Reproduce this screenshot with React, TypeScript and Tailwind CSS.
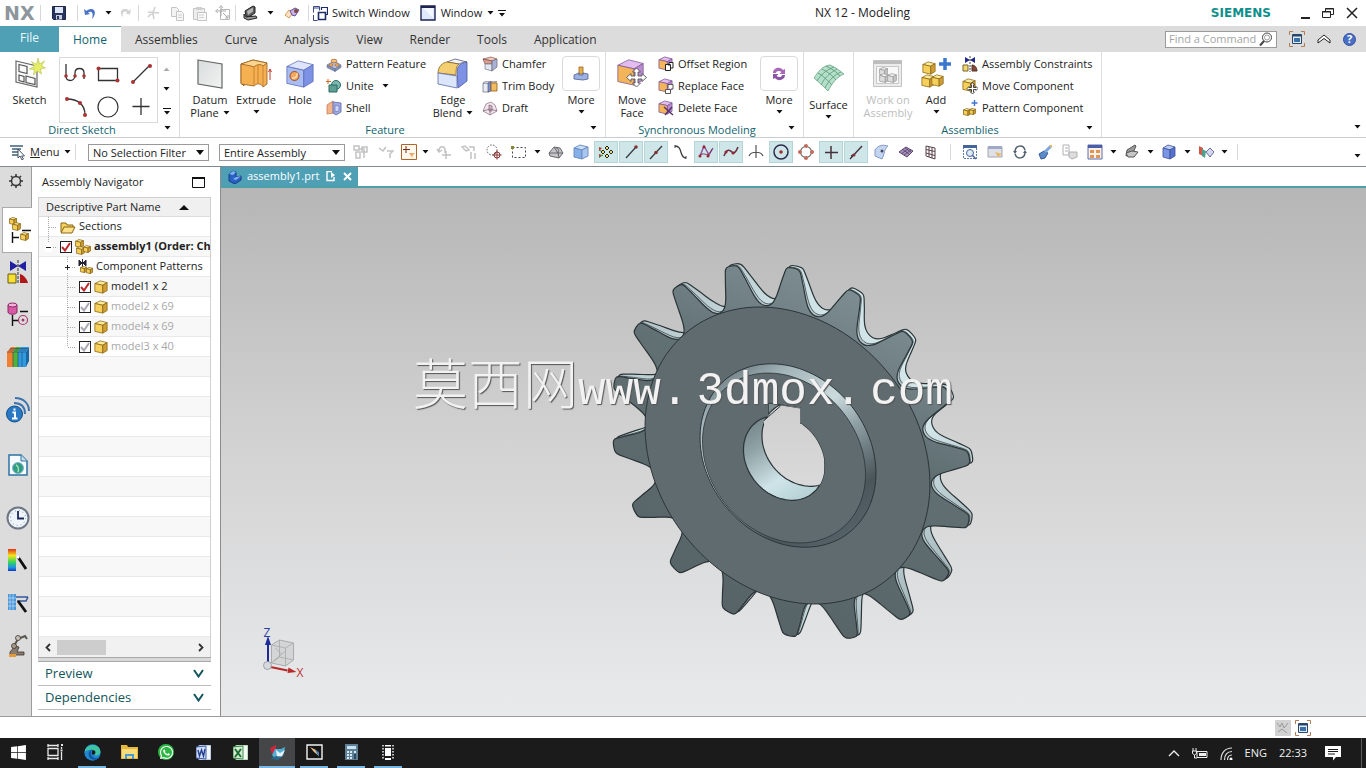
import React, { useState } from "react"
import type { ReactNode } from "react"
import { FaWhatsapp, FaWindows } from "react-icons/fa"

type SvgProps = { w?: number; h?: number; vb?: string; children: ReactNode }

const Svg = ({ w = 16, h, vb, children }: SvgProps) => (
    <svg width={w} height={h ?? w} viewBox={vb ?? `0 0 ${w} ${h ?? w}`} fill="none" className="shrink-0" aria-hidden="true">
        {children}
    </svg>
)

const Caret = ({ color = "#111" }: { color?: string }) => (
    <Svg w={7} h={4}><path d="M0.5 0h6L3.5 3.5z" fill={color} /></Svg>
)

const cubeColors = {
    yellow: ["#fdeb9a", "#f5d05a", "#cf9e34", "#8a6414"],
    orange: ["#f9c77a", "#f1a13c", "#d98422", "#8a5414"],
    purple: ["#e3bdf0", "#f4b45a", "#b98ad0", "#7c5694"],
    blue: ["#dfe6fb", "#a9bdf5", "#7d92e4", "#5a68b4"],
    gray: ["#f4f4f4", "#dedede", "#c6c6c6", "#9a9a9a"],
}

const cubeShape = (x: number, y: number, s: number, tone: keyof typeof cubeColors) => {
    const [top, front, side, line] = cubeColors[tone]
    return (
        <g transform={`translate(${x} ${y}) scale(${s / 16})`} stroke={line} strokeWidth={12 / s} strokeLinejoin="round">
            <path d="M1 4l6-3 8 2-5 3z" fill={top} />
            <path d="M1 4l9 2v9l-9-2z" fill={front} />
            <path d="M10 6l5-3v9l-5 3z" fill={side} />
        </g>
    )
}

const Cube = ({ size = 16, tone = "yellow" as keyof typeof cubeColors }) => <Svg w={size}>{cubeShape(0, 0, size, tone)}</Svg>

/* ---------- title bar ---------- */

const SaveIcon = () => (
    <Svg w={14}>
        <path d="M0.5 0.5h13v13h-12l-1-1z" fill="#27355f" stroke="#1c274a" />
        <path d="M3 1h8v6H3z" fill="#dfe6f4" />
        <path d="M4 9h6v4.5H4z" fill="#c9cfdd" />
        <path d="M5 10h2v3H5z" fill="#27355f" />
    </Svg>
)

const UndoIcon = ({ color = "#4a73c8" }) => (
    <Svg w={14} h={13}>
        <path d="M1 2l1 6 5-1-2-1.5C8 3.5 11 5 9 12c4-4 4-10-1-10C6 2 4 3 3.5 4z" fill={color} />
    </Svg>
)

const RedoIcon = () => (
    <Svg w={12} h={12}>
        <path d="M11 2l-1 5.500-4.500-1 2-1.500C4 3.500 2 5 3 10-1 6 1 2 5 2c2 0 3 .7 4 1.700z" fill="#d2d2d2" />
    </Svg>
)

const CutIcon = () => (
    <Svg w={14}><path d="M9 1L6 9M2 6l11 1M7 8l1 5M5 8l-3 3" stroke="#d0d0d0" strokeWidth="1.6" /></Svg>
)

const CopyIcon = () => (
    <Svg w={15}>
        <path d="M1.500 1.500h5l2 2v7h-7z" fill="#f3f3f3" stroke="#c4c4c4" />
        <path d="M6.500 5.500h5l2 2v7h-7z" fill="#f7f7f7" stroke="#c4c4c4" />
        <path d="M8 9h4M8 11.500h4" stroke="#d0d0d0" />
    </Svg>
)

const PasteIcon = () => (
    <Svg w={15}>
        <path d="M1.500 2.500h11v11h-11z" fill="#eee" stroke="#c4c4c4" />
        <path d="M4 1h6v3H4z" fill="#cfcfcf" />
        <path d="M5.500 6.500h9v8h-9z" fill="#f8f8f8" stroke="#c4c4c4" />
        <path d="M7 9h5M7 11.500h5" stroke="#d0d0d0" />
    </Svg>
)

const MoveBoxIcon = () => (
    <Svg w={16}>
        <path d="M5.500 4.500h9v10h-9z" stroke="#b8b8b8" />
        <path d="M6 1v10M1 6h10M8 8l5 5M10 13h3v-3" stroke="#a8a8a8" />
        <path d="M4 3l2-2.500L8 3M3 4L.5 6 3 8" stroke="#b8b8b8" />
    </Svg>
)

const RotateSheetIcon = () => (
    <Svg w={17} h={16}>
        <path d="M3 6l8-5 2 1v6l-6 4-3-1z" fill="#5c5c5c" stroke="#222" />
        <path d="M5 6l6-3.500v4L6 10z" fill="#b4b4b4" />
        <path d="M2 9l2 3 10-1 1 2-9 2-4-2z" fill="#9a9a9a" stroke="#222" />
    </Svg>
)

const EraserIcon = () => (
    <Svg w={16} h={12}>
        <path d="M1 8l4-5 4 3-4 5z" fill="#fbe3c3" stroke="#d69b58" />
        <path d="M6 4l5-3 4 2-4 6-3-1z" fill="#c5b4e6" stroke="#6b4a9c" />
        <circle cx="12" cy="4" r="2" fill="#7a4a3a" />
    </Svg>
)

const SwitchWindowIcon = () => (
    <Svg w={15}>
        <path d="M.5 6.500v-6h6v4M.5 2h6" stroke="#3a4a86" />
        <path d="M.5 9v5.500h4" stroke="#3a4a86" />
        <path d="M5.500 6.500h7v7h-7z" fill="#fff" stroke="#1d2c66" strokeWidth="1.600" />
        <path d="M8.500 4V1.500h6v7H13" stroke="#1d2c66" strokeWidth="1.200" />
    </Svg>
)

const WindowIcon = () => (
    <Svg w={16}>
        <path d="M1 1h14v14H1z" fill="#dfe7fb" stroke="#1d2452" strokeWidth="1.400" />
        <path d="M3 3l10 10V3z" fill="#f4f7ff" />
        <path d="M1 1h14v2H1z" fill="#1d2452" />
    </Svg>
)

const OverflowIcon = () => (
    <Svg w={8} h={7}><path d="M0 .5h8" stroke="#111" /><path d="M1 3h6L4 6.500z" fill="#111" /></Svg>
)

const Sep = () => <span className="h-4 w-px shrink-0 bg-[#d8d8d8]" />

const TitleButton = ({ label, width, children }: { label: string; width: string; children: ReactNode }) => (
    <button aria-label={label} className={`flex h-6 items-center justify-center ${width}`}>{children}</button>
)

const TitleBar = () => (
    <header className="flex h-[26px] items-center bg-white text-[#222]">
        <span className="w-9 pl-1 font-['DejaVu_Sans'] text-[19px] leading-6 font-bold text-[#8d969c]">NX</span>
        <div className="flex items-center">
            <span className="w-1" />
            <Sep />
            <TitleButton label="Save" width="w-9"><SaveIcon /></TitleButton>
            <Sep />
            <TitleButton label="Undo" width="w-6"><UndoIcon /></TitleButton>
            <TitleButton label="Undo list" width="w-3"><Caret /></TitleButton>
            <TitleButton label="Redo" width="w-6"><RedoIcon /></TitleButton>
            <Sep />
            <TitleButton label="Cut" width="w-7"><CutIcon /></TitleButton>
            <TitleButton label="Copy" width="w-5"><CopyIcon /></TitleButton>
            <TitleButton label="Paste" width="w-6"><PasteIcon /></TitleButton>
            <TitleButton label="Move object" width="w-6"><MoveBoxIcon /></TitleButton>
            <Sep />
            <TitleButton label="Orient view" width="w-7"><RotateSheetIcon /></TitleButton>
            <TitleButton label="View list" width="w-3"><Caret /></TitleButton>
            <TitleButton label="Eraser" width="w-8"><EraserIcon /></TitleButton>
            <Sep />
        </div>
        <button className="ml-1 flex items-center gap-1 text-[11px] text-[#222]"><SwitchWindowIcon />Switch Window</button>
        <button className="ml-2.5 flex items-center gap-[5px] text-[11px] text-[#222]"><WindowIcon />Window<Caret /></button>
        <button aria-label="More commands" className="p-1"><OverflowIcon /></button>
        <h1 className="flex-1 pl-1 text-center text-[12px]">NX 12 - Modeling</h1>
        <div className="flex items-center">
            <span className="pr-[26px] font-['DejaVu_Sans'] text-[12px] font-bold text-[#0f8f8a]">SIEMENS</span>
            <button aria-label="Minimize" className="pr-3 pl-1"><Svg w={9} h={12}><path d="M0 11h9" stroke="#222" strokeWidth="2" /></Svg></button>
            <button aria-label="Restore" className="w-6">
                <Svg w={12} h={10}><path d="M3.500 3V.5h8v6H9M.5 3.500h8v6h-8z" stroke="#222" /><path d="M3 1h9M0 4h9" stroke="#222" /></Svg>
            </button>
            <button aria-label="Close" className="w-5"><Svg w={12}><path d="M1 1l10 10M11 1L1 11" stroke="#222" strokeWidth="1.500" /></Svg></button>
        </div>
    </header>
)

/* ---------- ribbon tabs ---------- */

const tabs = ["Home", "Assemblies", "Curve", "Analysis", "View", "Render", "Tools", "Application"]

const FullScreenIcon = () => (
    <Svg w={16}>
        <path d="M.5 4V.5H4M12 .5h3.500V4M15.500 12v3.500H12M4 15.500H.5V12" stroke="#b07c58" />
        <path d="M3.500 3.500h9v9h-9z" fill="#dfeaf4" stroke="#2b4666" />
        <path d="M4 4.500h8" stroke="#2b4666" strokeWidth="2" />
        <path d="M5 7h6v4H5z" fill="#3a72a8" />
    </Svg>
)

const TabBar = () => {
    const [active, setActive] = useState<string>("Home")
    return (
        <nav className="flex h-[26px] items-stretch gap-px bg-[#dcdcdc] text-[12px] text-[#333]">
            <button className="-mr-px w-[59px] bg-[#4f9fb5] pb-0.5 text-[#eafaff]">File</button>
            {tabs.map((tab) => (
                <button
                    key={tab}
                    onClick={() => setActive(tab)}
                    className={tab === active ? "border-t border-[#6f9aa6] bg-white px-[14px] text-[#12636e]" : "px-[13px] pt-px"}
                >
                    {tab}
                </button>
            ))}
            <div className="flex flex-1 items-center justify-end gap-3 pr-[10px]">
                <label className="flex h-[17px] w-28 items-center border border-[#9a9a9a] bg-white">
                    <input aria-label="Find a Command" placeholder="Find a Command" className="h-4 w-[92px] pl-[3px] text-[11px] outline-none placeholder:text-[#a5a5a5]" />
                    <Svg w={15}><circle cx="9" cy="5.500" r="4.500" stroke="#444" /><circle cx="9" cy="5.500" r="2.500" stroke="#777" strokeWidth="0.700" /><path d="M6 9l-4 4.500" stroke="#444" strokeWidth="2" /></Svg>
                </label>
                <button aria-label="Full screen"><FullScreenIcon /></button>
                <button aria-label="Minimize ribbon">
                    <Svg w={14} h={11}><path d="M1 6l6-5 6 5v3L7 4.500 1 9z" fill="#fff" stroke="#222" strokeLinejoin="round" /></Svg>
                </button>
                <button aria-label="Help" className="flex h-[13px] w-[13px] items-center justify-center rounded-full border border-[#2d4fa0] bg-[#4a6fc4] text-[11px] leading-3 font-bold text-white">?</button>
            </div>
        </nav>
    )
}

/* ---------- ribbon icons ---------- */

const SketchIcon = () => (
    <Svg w={32}>
        <path d="M2 3l21 5v21L2 24z" fill="#fafafa" stroke="#666" strokeWidth="1.200" />
        <path d="M5 6.500l8 2v7l-8-2zM5 17l5 1.500v5.500l-5-1.500zM12 18l9 2.500v6l-9-2z" stroke="#555" strokeWidth="1.200" />
        <path d="M24 0l1.500 6 5-3-3 5 4 2-5 1 1 5-4-3-4 4 1-5.500-5-.5 5-2.500-3-5 5 3z" fill="#e6ee66" stroke="#b4c04a" strokeWidth="0.600" />
    </Svg>
)

const ProfileIcon = () => (
    <Svg w={26}>
        <path d="M3 3v12c0 6 8 6 9 0V12c0-6 9-6 9 0v6" stroke="#333" strokeWidth="1.300" />
        <g fill="#a33"><circle cx="3" cy="15" r="1.800" /><circle cx="12" cy="15" r="1.800" /><circle cx="21" cy="15" r="1.800" /></g>
    </Svg>
)
const RectIcon = () => (
    <Svg w={26}>
        <path d="M3.500 7.500h19v12h-19z" stroke="#333" strokeWidth="1.300" />
        <circle cx="3.500" cy="7.500" r="2" fill="#a33" /><circle cx="22.500" cy="19.500" r="2" fill="#a33" />
    </Svg>
)
const LineIcon = () => (
    <Svg w={26}>
        <path d="M5 21L22 4" stroke="#333" strokeWidth="1.200" />
        <circle cx="5" cy="21" r="2" fill="#a33" /><circle cx="22" cy="5" r="2" fill="#a33" />
    </Svg>
)
const ArcIcon = () => (
    <Svg w={26}>
        <path d="M4 6c10 0 18 5 18 16" stroke="#333" strokeWidth="1.300" />
        <g fill="#a33"><circle cx="4" cy="6" r="2" /><circle cx="17" cy="10" r="2" /><circle cx="22" cy="22" r="2" /></g>
    </Svg>
)
const CircleIcon = () => <Svg w={26}><circle cx="13" cy="14" r="10" stroke="#333" strokeWidth="1.200" /></Svg>
const PlusIcon = () => <Svg w={26}><path d="M13 5v17M4.500 13.500h17" stroke="#333" strokeWidth="1.300" /></Svg>

const DatumIcon = () => (
    <Svg w={32}>
        <defs><linearGradient id="datum" x1="0" y1="0" x2="1" y2="1"><stop stopColor="#d8dcdc" /><stop offset="1" stopColor="#f2f3f3" /></linearGradient></defs>
        <path d="M4 2l24 4v24L4 26z" fill="url(#datum)" stroke="#666" strokeWidth="1.200" />
    </Svg>
)

const ExtrudeIcon = () => (
    <Svg w={32}>
        <path d="M1 6l3 3v19l-3-3z" fill="#e09330" stroke="#9a5c14" strokeWidth="0.800" />
        <path d="M1 6l12-4 14 3v21l-4 3c-2-4-6-4-9-1L1 26z" fill="#f5b052" stroke="#9a5c14" strokeWidth="0.800" />
        <path d="M1 6l10 2 3 1c3-3 7-3 9-1l4-3-14-3z" fill="#fbd590" stroke="#9a5c14" strokeWidth="0.800" />
        <path d="M14 9v19M18 7v19M23 8v20" stroke="#c07c2c" strokeWidth="0.800" />
        <path d="M30 22V11M28.500 14l1.500-3 1.500 3" stroke="#c0392b" />
    </Svg>
)

const HoleIcon = () => (
    <Svg w={32}>
        {cubeShape(1, 1, 30, "blue")}
        <circle cx="10.500" cy="18" r="4.500" fill="#f3a860" stroke="#a04c22" />
        <path d="M8 20a4 4 0 005-5" stroke="#fde0b5" strokeWidth="1.500" />
    </Svg>
)

const PatternFeatureIcon = () => (
    <Svg>
        <path d="M1 9l7-4 7 4-6 4z" fill="#b6c0de" stroke="#7a82a4" strokeWidth="0.800" />
        <path d="M1 9v2.500l8 4V13zM9 13v2.500l6-4V9z" fill="#8090bc" stroke="#6a7294" strokeWidth="0.600" />
        <g fill="#f6c070" stroke="#a0622a" strokeWidth="0.700"><ellipse cx="8" cy="5" rx="3" ry="1.800" /><ellipse cx="5" cy="9" rx="2" ry="1.200" /><ellipse cx="11" cy="9" rx="2" ry="1.200" /></g>
    </Svg>
)
const UniteIcon = () => (
    <Svg>
        <circle cx="10" cy="7" r="4.500" fill="#7db8ae" stroke="#2b6b62" />
        <path d="M3 7h8v7H3z" fill="#5d9f95" stroke="#2b6b62" />
        <path d="M2 1v5M0 3.500h5" stroke="#d2691e" />
    </Svg>
)
const ShellIcon = () => (
    <Svg>
        <path d="M1 5l6-4 1 12-7 1z" fill="#f4b48a" stroke="#c47c54" strokeWidth="0.800" />
        <path d="M7 2l8 1v9l-5 3-3-2z" fill="#a3aee6" stroke="#5a62a4" strokeWidth="0.800" />
        <path d="M9 5l4 1v5l-4 1z" fill="#cfd6fa" stroke="#5a62a4" strokeWidth="0.600" />
    </Svg>
)
const EdgeBlendIcon = () => (
    <Svg w={32}>
        <path d="M20 12c1-5 4-7 10-8v19l-9 7z" fill="#7d92e4" stroke="#4a579a" strokeWidth="0.800" />
        <path d="M10 4l8-3 12 3c-4 0-6 1-8 2z" fill="#f4f4fb" stroke="#5a5a7a" strokeWidth="0.800" />
        <path d="M1 14C2 8 5 5 10 4l12 2c-3 2-3 6-3 11L1 15z" fill="#f3cf72" stroke="#8a6414" strokeWidth="0.800" />
        <path d="M1 15l19 3v12L1 26z" fill="#dce6fb" stroke="#5a6ab0" strokeWidth="0.800" />
    </Svg>
)
const ChamferIcon = () => (
    <Svg>
        <path d="M1 3l9 2 5-2-6-2z" fill="#f0c8ba" stroke="#8a5a5a" strokeWidth="0.700" />
        <path d="M1 3l2 5h7V5z" fill="#d8a292" stroke="#7a4a4a" strokeWidth="0.700" />
        <path d="M3 8h7v7l-7-2z" fill="#e4e7f2" stroke="#778" strokeWidth="0.700" /><path d="M10 5l5-2v8l-5 4z" fill="#a9b2d6" stroke="#667" strokeWidth="0.700" />
    </Svg>
)
const TrimIcon = () => (
    <Svg>
        <path d="M1 5h6v9H1z" fill="#e8ecf6" stroke="#778" strokeWidth="0.800" /><path d="M1 5l2-1.500h12L13 5z" fill="#f4f4f8" stroke="#778" strokeWidth="0.600" /><path d="M6 5l3-1.500V13l-3 1z" fill="#7e92d8" stroke="#445" strokeWidth="0.600" /><path d="M9 5h6v8H9z" fill="#f2bd62" stroke="#8a5c1c" strokeWidth="0.800" />
    </Svg>
)
const DraftIcon = () => (
    <Svg>
        <path d="M1 11l3-7 5-2 4 3 2 6-7 4z" fill="#efe6ed" stroke="#9a7a8c" strokeWidth="0.800" /><path d="M7 5l3 1v5H7z" fill="#cfb8c8" stroke="#8a6a7c" strokeWidth="0.800" /><path d="M1 11l7-2 7 2M8 9v6" stroke="#8a6a7c" strokeWidth="0.800" />
    </Svg>
)
const MoreFeatureIcon = () => (
    <Svg w={16}>
        <path d="M6 1h4v7H6z" fill="#e8b04e" stroke="#96661c" strokeWidth="0.800" /><path d="M1 9l5-2v2h4V7l5 1v5l-5 1-9-1z" fill="#9db2e4" stroke="#4c5c90" strokeWidth="0.800" />
    </Svg>
)
const MoveFaceIcon = () => (
    <Svg w={32}>
        {cubeShape(0, 0, 29, "purple")}
        <path d="M20.500 10l4 4h-2.500v4h4v-2.500l4.500 4-4.500 4V21h-4v4h2.500l-4 4-4-4H19v-4h-4v2.500l-4.500-4 4.500-4V18h4v-4h-2.500z" fill="#fff" stroke="#555" strokeWidth="0.900" />
    </Svg>
)
const FaceIcon = ({ kind }: { kind: "offset" | "replace" | "delete" }) => (
    <Svg>
        {cubeShape(0, 0, 15, "purple")}
        {kind === "offset" && <path d="M7.500 8.500h5v6h-5zM11 10V6.500h4V12h-2" fill="#fff" stroke="#222" />}
        {kind === "replace" && <path d="M7.500 11.500h5v4h-5zM10 10V6.500h5V11h-2" fill="#fff" stroke="#555" />}
        {kind === "delete" && <path d="M6 7l9 8M14 7l-7 8" stroke="#5a3468" strokeWidth="1.500" />}
    </Svg>
)
const SyncIcon = () => (
    <Svg w={16}>
        <path d="M2 7c0-5 7-7 10-3l2-1v5H8.500l2-2C8 4 5 5 5 7z" fill="#a868b8" />
        <path d="M14 9c0 5-7 7-10 3l-2 1V8h5.500l-2 2c2.500 2 5.500 1 5.500-1z" fill="#8a56a4" />
    </Svg>
)
const SurfaceIcon = () => (
    <Svg w={32}>
        <path d="M1 15C5 9 9 3 17 2c5 2 9 5 14 9-7 3-12 9-16 17C11 24 6 19 1 15z" fill="#b4dfc8" stroke="#6aa488" strokeWidth="0.800" />
        <path d="M4 18C8 11 14 7 21 4M8 22c4-8 9-12 16-16M12 25c4-8 9-13 16-16M5 10c6 3 10 8 14 12M9 6c6 3 11 7 14 11M13 3c6 3 11 6 14 10" stroke="#5a967a" strokeWidth="0.800" />
    </Svg>
)
const WorkOnIcon = () => (
    <Svg w={32}>
        <path d="M1.500 2.500h28v26h-28z" fill="#ececec" stroke="#c2c2c2" /><path d="M1 3h29v3H1z" fill="#bdbdbd" /><path d="M4.500 8.500h22v17h-22z" fill="#f8f8f8" stroke="#c8c8c8" />
        {cubeShape(7, 9, 9, "gray")}{cubeShape(7, 15, 10, "gray")}{cubeShape(15, 15, 10, "gray")}
    </Svg>
)
const AddIcon = () => (
    <Svg w={32}>
        {cubeShape(2, 3, 14, "yellow")}{cubeShape(1, 16, 14, "yellow")}{cubeShape(11, 16, 13, "yellow")}
        <path d="M25 0v12M19 6h12" stroke="#3b78cf" strokeWidth="3.500" />
    </Svg>
)
const ConstraintIcon = () => (
    <Svg>
        <path d="M3 1l5 3-5 3zM13 1L8 4l5 3z" fill="#252a8a" /><path d="M8 0v16" stroke="#444" strokeDasharray="2 1" /><path d="M1 9h5v6H1z" fill="#f3d676" stroke="#7a6420" /><path d="M10 9c3 0 5 3 5 6h-5z" fill="#8a4a3a" stroke="#54302a" />
    </Svg>
)
const MoveComponentIcon = () => (
    <Svg>
        {cubeShape(0, 0, 14, "yellow")}
        <path d="M10.500 4.500l2 2.500h-1v2.500H14v-1l2 2-2 2v-1h-2.500V14h1l-2 2-2-2h1v-2.500H7v1l-2-2 2-2v1h2.500V7h-1z" fill="#fff" stroke="#222" strokeWidth="0.800" />
    </Svg>
)
const PatternComponentIcon = () => (
    <Svg>{cubeShape(1, 8, 8, "yellow")}{cubeShape(7, 8, 7, "yellow")}<path d="M12.500 0v6M9.500 3h6" stroke="#3b78cf" strokeWidth="1.400" /></Svg>
)

/* ---------- ribbon ---------- */

type BigProps = { label: string[]; icon: ReactNode; width: string; drop?: boolean; disabled?: boolean; framed?: boolean }

const BigButton = ({ label, icon, width, drop, disabled, framed }: BigProps) => (
    <button disabled={disabled} className={`flex flex-col items-center pt-[3px] text-[11px] leading-[13px] ${width} ${disabled ? "text-[#bdbdbd]" : "text-[#222]"}`}>
        <span className={framed ? "mb-0.5 flex h-[35px] w-[38px] items-center justify-center rounded-sm border border-[#dadada]" : "mb-px flex h-9 items-center justify-center"}>{icon}</span>
        {label.map((line, i) => (
            <span key={line} className="flex items-center gap-1">
                {line}
                {drop && label.length > 1 && i === label.length - 1 && <Caret />}
            </span>
        ))}
        {drop && label.length === 1 && <span className="flex h-3 items-center"><Caret /></span>}
    </button>
)

type SmallItem = { label: string; icon: ReactNode; drop?: boolean }

const SmallColumn = ({ items, width }: { items: SmallItem[]; width: string }) => (
    <div className={`flex flex-col ${width}`}>
        {items.map((item) => (
            <button key={item.label} className="flex h-[22px] items-center gap-1 text-[11px] whitespace-nowrap text-[#222]">
                {item.icon}
                {item.label}
                {item.drop && <span className="pl-1"><Caret /></span>}
            </button>
        ))}
    </div>
)

const Group = ({ title, children, corner = true, pad }: { title?: string; children: ReactNode; corner?: boolean; pad: string }) => (
    <section className="flex flex-col border-r border-[#dcdcdc]">
        <div className={`flex h-[70px] items-start ${pad}`}>{children}</div>
        <div className="flex h-[15px] items-center pr-2 text-[11px] leading-[15px] text-[#12636e]">
            <span className="flex-1 text-center">{title}</span>
            {corner && <button aria-label={`${title} options`} className="pb-1"><Caret /></button>}
        </div>
    </section>
)

const sketchTools = [
    { name: "Profile", icon: <ProfileIcon /> },
    { name: "Rectangle", icon: <RectIcon /> },
    { name: "Line", icon: <LineIcon /> },
    { name: "Arc", icon: <ArcIcon /> },
    { name: "Circle", icon: <CircleIcon /> },
    { name: "Point", icon: <PlusIcon /> },
]

const featureA = [
    { label: "Pattern Feature", icon: <PatternFeatureIcon /> },
    { label: "Unite", icon: <UniteIcon />, drop: true },
    { label: "Shell", icon: <ShellIcon /> },
]
const featureB = [
    { label: "Chamfer", icon: <ChamferIcon /> },
    { label: "Trim Body", icon: <TrimIcon /> },
    { label: "Draft", icon: <DraftIcon /> },
]
const faceTools = [
    { label: "Offset Region", icon: <FaceIcon kind="offset" /> },
    { label: "Replace Face", icon: <FaceIcon kind="replace" /> },
    { label: "Delete Face", icon: <FaceIcon kind="delete" /> },
]
const assemblyTools = [
    { label: "Assembly Constraints", icon: <ConstraintIcon /> },
    { label: "Move Component", icon: <MoveComponentIcon /> },
    { label: "Pattern Component", icon: <PatternComponentIcon /> },
]

const Ribbon = () => (
    <div className="flex h-[86px] border-b border-[#c9cdd0] bg-white">
        <Group title="Direct Sketch" pad="pt-px">
            <BigButton label={["Sketch"]} icon={<SketchIcon />} width="w-[59px]" />
            <div className="mt-1 grid w-[99px] grid-cols-3 place-items-center border border-[#dadada]">
                {sketchTools.map((tool) => (
                    <button key={tool.name} aria-label={tool.name} className="flex h-8 w-8 items-center justify-center">{tool.icon}</button>
                ))}
            </div>
            <div className="mt-1.5 flex h-16 w-[21px] flex-col items-center justify-around pr-1">
                <button aria-label="Scroll up" className="rotate-180"><Caret color="#aaa" /></button>
                <button aria-label="Scroll down"><Caret /></button>
                <button aria-label="Expand gallery"><OverflowIcon /></button>
            </div>
        </Group>
        <Group title="Feature" pad="pt-px pl-1.5">
            <BigButton label={["Datum", "Plane"]} icon={<DatumIcon />} width="w-12" drop />
            <BigButton label={["Extrude"]} icon={<ExtrudeIcon />} width="w-11" drop />
            <BigButton label={["Hole"]} icon={<HoleIcon />} width="w-11" />
            <span className="w-1" />
            <SmallColumn items={featureA} width="w-[105px]" />
            <BigButton label={["Edge", "Blend"]} icon={<EdgeBlendIcon />} width="w-11" drop />
            <span className="w-[7px]" />
            <SmallColumn items={featureB} width="w-[79px]" />
            <BigButton label={["More"]} icon={<MoreFeatureIcon />} width="w-10" drop framed />
            <span className="w-1" />
        </Group>
        <Group title="Synchronous Modeling" pad="pt-px pl-1">
            <BigButton label={["Move", "Face"]} icon={<MoveFaceIcon />} width="w-11" />
            <span className="w-1" />
            <SmallColumn items={faceTools} width="w-[101px]" />
            <BigButton label={["More"]} icon={<SyncIcon />} width="w-10" drop framed />
            <span className="w-1" />
        </Group>
        <Group corner={false} pad="pt-1.5">
            <BigButton label={["Surface"]} icon={<SurfaceIcon />} width="w-[49px]" drop />
        </Group>
        <Group title="Assemblies" pad="pt-px pl-1.5">
            <BigButton label={["Work on", "Assembly"]} icon={<WorkOnIcon />} width="w-14" disabled />
            <BigButton label={["Add"]} icon={<AddIcon />} width="w-10" drop />
            <span className="w-1.5" />
            <SmallColumn items={assemblyTools} width="w-[139px]" />
        </Group>
        <div className="flex flex-1 items-end justify-end pr-[5px] pb-2"><Caret /></div>
    </div>
)

/* ---------- selection bar ---------- */

const ghost = "#c2c2c2"
const dark = "#3a3a44"

type BarItem = { name: string; icon?: ReactNode; on?: boolean; kind?: "caret" | "sep" | "narrow" }

const caret = (name: string): BarItem => ({ name, kind: "caret" })

const barItems: BarItem[] = [
    { name: "Reset filters", icon: <Svg><path d="M1 2h5v4H1zM3 8h4v6H3zM6 5h5v6M9 3h5v5H9zM11 9v5" stroke={ghost} strokeWidth="1.500" /></Svg> },
    { name: "Deselect", icon: <Svg><path d="M1 4l4 3 3-4M9 7h6l-3 3v4" stroke={ghost} strokeWidth="1.500" /></Svg> },
    { name: "Point filter", kind: "narrow", icon: <Svg><path d="M.5.5h15v15H.5z" fill="#fff8ef" stroke="#b0642a" /><path d="M5 2v7M2 5.500h7" stroke="#7a2d18" /><path d="M8 9h6l-2.500 2.500V14z" fill="#f0a860" /></Svg> },
    caret("Point filter list"),
    { name: "Up one level", icon: <Svg><path d="M3 7c0-5 6-6 6-1v3M1 5l2 3 3-2M10 7v8M6 11h9" stroke={ghost} strokeWidth="1.500" /></Svg> },
    { name: "Chain", icon: <Svg><path d="M1 3l3-1 4 4-3 1zM8 3h5v4M10 8v7M14 9v6" stroke={ghost} strokeWidth="1.500" /></Svg> },
    { name: "Highlight", icon: <Svg><circle cx="6" cy="6" r="5" stroke="#555" strokeDasharray="1.500 1.500" /><circle cx="11" cy="11" r="3" stroke="#8a3434" /><path d="M11 6.500v9M6.500 11h9" stroke="#8a3434" /></Svg> },
    { name: "Rectangle select", icon: <Svg><path d="M1.500 3.500h13v10h-13z" stroke="#444" strokeDasharray="2 2" /><path d="M0 2h3v3H0z" fill="#883" /></Svg> },
    caret("Rectangle select list"),
    { name: "Faces", icon: <Svg><path d="M1 9l5-6 6 1 3 5-4 5-9-2z" fill="#c5c5c9" stroke="#66666c" /><path d="M6 3l4 6 5 0M1 9l9 0 1 5M8 4c3 0 3 3 2 5" stroke="#66666c" /></Svg> },
    { name: "Shaded", icon: <Svg><path d="M1 4l6-3 8 2-6 3z" fill="#c9def7" stroke="#6f8fc4" /><path d="M1 4l8 2v9l-8-2z" fill="#86aee8" stroke="#6f8fc4" /><path d="M9 6l6-3v9l-6 3z" fill="#a9c6ef" stroke="#6f8fc4" /></Svg> },
    { name: "Snap points", on: true, icon: <Svg><path d="M1 3l3 1-3 3zM1 10l3 1-3 3z" fill="#c0392b" /><path d="M1 6l4 2M1 13l4-2" stroke="#2e8b3a" /><g fill="#f3e06a" stroke="#222"><path d="M9 2l2 2-2 2-2-2zM13 6l2 2-2 2-2-2zM9 10l2 2-2 2-2-2zM5 6l2 2-2 2-2-2z" /></g></Svg> },
    { name: "End point", on: true, icon: <Svg><path d="M3 14L13 3" stroke={dark} strokeWidth="1.300" /><circle cx="13" cy="3" r="1.800" fill="#833" /></Svg> },
    { name: "Mid point", on: true, icon: <Svg><path d="M2 15L14 2" stroke={dark} strokeWidth="1.300" /><circle cx="8" cy="8.500" r="1.800" fill="#833" /></Svg> },
    { name: "Control point", icon: <Svg><path d="M2 2c8 0 4 12 11 12" stroke={dark} strokeWidth="1.300" /><path d="M2 1v3M13 12v3" stroke={dark} /></Svg> },
    { name: "Poles", on: true, icon: <Svg><path d="M2 12L6 2l5 9 4-7" stroke="#8a4a9a" strokeWidth="1.300" /><path d="M1 12c6-6 8 4 13-7" stroke="#7a3050" /><g fill="#923"><circle cx="2" cy="12" r="1.500" /><circle cx="6" cy="3" r="1.500" /><circle cx="10" cy="12" r="1.500" /></g></Svg> },
    { name: "Defining point", on: true, icon: <Svg><path d="M1 12c3-8 6-6 8-4s4 0 6-5" stroke="#6a3040" strokeWidth="1.600" /><circle cx="3" cy="8" r="1.500" fill="#923" /><circle cx="10" cy="9" r="1.500" fill="#923" /></Svg> },
    { name: "Intersection", icon: <Svg><path d="M1 12c2-5 12-5 14 0M8 1v13" stroke="#555" strokeWidth="1.200" /></Svg> },
    { name: "Arc center", on: true, icon: <Svg><circle cx="8" cy="8" r="7" stroke="#2c2c4c" strokeWidth="1.500" /><circle cx="8" cy="8" r="1.800" fill="#933" /></Svg> },
    { name: "Quadrant", icon: <Svg><circle cx="8" cy="8" r="5.500" stroke="#666" strokeWidth="1.200" /><g fill="#c26a5a"><circle cx="8" cy="2" r="2" /><circle cx="8" cy="14" r="2" /><circle cx="2" cy="8" r="2" /><circle cx="14" cy="8" r="2" /></g></Svg> },
    { name: "Existing point", on: true, icon: <Svg><path d="M8 2v13M2 8.500h13" stroke="#44303c" strokeWidth="1.500" /></Svg> },
    { name: "Point on curve", on: true, icon: <Svg><path d="M2 15L14 2M3 12l5-3" stroke="#44303c" strokeWidth="1.400" /><circle cx="6" cy="11" r="1.500" fill="#833" /></Svg> },
    { name: "Point on face", icon: <Svg><path d="M2 6c4-6 9-5 13-4-4 3-3 7-6 13L2 12z" fill="#c4d4ee" stroke="#7f9ac8" /><circle cx="9" cy="7" r="1.500" fill="#446" /></Svg> },
    { name: "Facet vertex", icon: <Svg><path d="M1 8l7-5 7 4-6 6z" fill="#a591b8" stroke="#5a4470" /><path d="M3 10l7-5M6 11l7-5M4 5l7 5M7 4l6 4" stroke="#5a4470" strokeWidth="0.800" /></Svg> },
    { name: "Grid point", icon: <Svg><path d="M3 2l9 2v11l-9-3zM6 3v10M9 3.500v10.500M3 5.500l9 2M3 9l9 2.500" stroke="#5a4048" /></Svg> },
    { name: "sep1", kind: "sep" },
    { name: "Fit", icon: <Svg><path d="M1.500 3v11.500h13V3" stroke="#5a78a8" strokeDasharray="2 1" /><path d="M1 1h14v3H1z" fill="#46649c" /><circle cx="8" cy="9" r="3.500" fill="#dfeaf8" stroke="#46649c" /><path d="M10 11l4 4" stroke="#46649c" strokeWidth="1.500" /></Svg> },
    { name: "Zoom", icon: <Svg><path d="M1 3h14v10H1z" fill="#dfe0e6" stroke="#a0a4b4" /><path d="M1 2h14v3H1z" fill="#a0a8c8" /><path d="M8 8l3 5 4-3z" fill="#eab864" /></Svg> },
    { name: "Rotate", icon: <Svg><path d="M13 6C11 0 3 1 3 8M3 10c2 6 10 5 10-2" stroke="#566070" strokeWidth="1.500" /><path d="M1 7h4l-2 3zM15 9h-4l2-3z" fill="#566070" /></Svg> },
    { name: "Perspective", icon: <Svg><path d="M2 10l5-3 4 2-3 5-4 1z" fill="#5a8ac8" stroke="#3a5c98" /><path d="M8 8l6-6" stroke="#7fa6dc" strokeWidth="3" /><circle cx="14" cy="2" r="1.300" fill="#e9b964" /></Svg> },
    { name: "Layer settings", icon: <Svg><path d="M1 1h6v10H1zM3 4h3M3 7h3" stroke="#b0b0b4" /><path d="M7 8h8v5l-5 2-3-2z" fill="#dcdcdc" stroke="#b0b0b4" /></Svg> },
    { name: "View layout", icon: <Svg><path d="M1 1h14v14H1z" fill="#f8f2ea" stroke="#5c6cae" /><path d="M1 1h14v3H1z" fill="#4c5ca6" /><path d="M3 6h4v3H3zM9 6h4v3H9zM3 11h4v3H3zM9 11h4v3H9z" fill="#e39652" /></Svg> },
    caret("View layout list"),
    { name: "Orient view", icon: <Svg><path d="M3 6l8-5 1 1-3 7-7 3z" fill="#9a9a9a" stroke="#555" /><path d="M2 9l6-2 6 1-4 5H4z" fill="#c6c6c6" stroke="#555" /></Svg> },
    caret("Orient view list"),
    { name: "Render style", icon: <Svg><g stroke="#3a509c" strokeWidth="0.800"><path d="M2 4l5-3 7 2-5 3z" fill="#b9ccf7" /><path d="M2 4l7 2v9l-7-2z" fill="#7c96e6" /><path d="M9 6l5-3v9l-5 3z" fill="#5870cc" /></g></Svg> },
    caret("Render style list"),
    { name: "Show and hide", icon: <Svg><path d="M1 2l4 2v8l-4-2z" fill="#d05a4a" /><path d="M4 5l4 2-1 7-3-2z" fill="#4aa08c" /><path d="M12 4l4 4-4 5-4-5z" fill="#d5d8ee" stroke="#6670a0" /></Svg> },
    caret("Show and hide list"),
    { name: "sep2", kind: "sep" },
]

const Dropdown = ({ label, width }: { label: string; width: string }) => (
    <div className={`grid h-[17px] items-center border border-[#999] ${width}`}>
        <select aria-label={label} className="col-start-1 row-start-1 h-[15px] appearance-none bg-white pl-1 text-[11px] leading-[15px] text-[#222]">
            <option>{label}</option>
        </select>
        <span className="pointer-events-none col-start-1 row-start-1 justify-self-end pr-1"><Svg w={8} h={5}><path d="M0 0h8L4 5z" fill="#111" /></Svg></span>
    </div>
)

const SelectionBar = () => (
    <div className="flex h-[29px] items-center border-b border-[#7f8a90] bg-white pr-[5px]">
        <button className="flex w-[75px] items-center gap-1 pl-[10px] text-[11px] text-[#222]">
            <Svg><path d="M0 2h13M2 5h9M2 8h6M2 11h6" stroke="#3f6078" strokeWidth="1.400" /><path d="M8 5v9l2-2 2 4 1.500-1-2-3h3z" fill="#fff" stroke="#345" strokeWidth="0.900" /></Svg>
            <span><span className="underline">M</span>enu</span>
            <Caret />
        </button>
        <Sep />
        <div className="ml-3 flex items-center gap-[10px] pr-1">
            <Dropdown label="No Selection Filter" width="w-[121px]" />
            <Dropdown label="Entire Assembly" width="w-[126px]" />
        </div>
        <div className="flex flex-1 items-center gap-px">
            {barItems.map((item) => {
                if (item.kind === "sep") return <span key={item.name} className="flex w-[13px] justify-center"><Sep /></span>
                if (item.kind === "caret") return <button key={item.name} aria-label={item.name} className="flex h-6 w-[11px] items-center justify-center"><Caret /></button>
                return (
                    <button
                        key={item.name}
                        aria-label={item.name}
                        className={`flex h-[22px] items-center justify-center border ${item.kind === "narrow" ? "w-5" : "w-6"} ${item.on ? "border-[#b4d6da] bg-[#cfe6e9]" : "border-transparent"}`}
                    >
                        {item.icon}
                    </button>
                )
            })}
        </div>
        <span className="pt-2"><Caret /></span>
    </div>
)

/* ---------- resource rail ---------- */

const rail = [
    {
        name: "Assembly Navigator", box: "h-[46px]",
        icon: <Svg w={24} h={26}>{cubeShape(1, 0, 8, "yellow")}{cubeShape(4, 5, 9, "yellow")}{cubeShape(12, 15, 9, "yellow")}<path d="M14 13.500h9M4.500 15v11M4 20.500h7" stroke="#111" strokeWidth="1.400" /></Svg>,
    },
    {
        name: "Constraint Navigator", box: "h-[38px]",
        icon: <Svg w={22} h={24}><path d="M3 1l8 5-8 5zM19 1l-8 5 8 5z" fill="#2020a0" /><path d="M11 0v24" stroke="#333" strokeDasharray="3 1" /><path d="M1 14h8v9H1z" fill="#f6e032" stroke="#6a5c10" /><path d="M13 14c4 1 7 5 8 9h-8z" fill="#b01818" /></Svg>,
    },
    {
        name: "Part Navigator", box: "h-[45px]",
        icon: <Svg w={22} h={24}><path d="M1 3v7c0 3 9 3 9 0V3" fill="#d85aa6" stroke="#8a2464" /><ellipse cx="5.500" cy="3" rx="4.500" ry="2" fill="#f3b0d6" stroke="#8a2464" /><path d="M13 9.500h8M5.500 13v11M6 18.500h5" stroke="#111" strokeWidth="1.400" /><circle cx="16" cy="18" r="4.500" stroke="#a8386c" strokeWidth="1.200" /><circle cx="16" cy="18" r="1.500" fill="#a8386c" /></Svg>,
    },
    {
        name: "Reuse Library", box: "h-[42px]",
        icon: <Svg w={24} h={22}><path d="M1 6l4-5h5L7 6v15H1z" fill="#f08030" /><path d="M7 6l3-5h5l-3 5v15H7z" fill="#4ab43c" /><path d="M12 6l3-5h8l-3 5v15h-8z" fill="#2f9adf" /><path d="M20 6l3-5v14l-3 6z" fill="#1767a4" /><path d="M7 6v15M12 6v15M16 6v15M1 6h19M3 4h18M4 2.500h18" stroke="#235" strokeWidth="0.500" /></Svg>,
    },
    {
        name: "HD3D Tools", box: "h-[63px]",
        icon: <Svg w={24} h={26}><circle cx="8.500" cy="17" r="8" fill="#2878c4" stroke="#15508c" /><path d="M8.500 11.500v2M6.500 15.500h2.500v6M6 21.500h5.500" stroke="#fff" strokeWidth="2" /><path d="M8 6c7 0 11 4 11 11M9 1c9 0 14 6 14 13" stroke="#3d74ae" strokeWidth="2" /></Svg>,
    },
    {
        name: "Web Browser", box: "h-12",
        icon: <Svg w={20} h={22}><path d="M1 1h12l6 6v14H1z" fill="#f6fbff" stroke="#2c72a4" strokeWidth="1.500" /><path d="M13 1v6h6" fill="#cde" stroke="#2c72a4" /><circle cx="10" cy="14" r="5.500" fill="#2f9d86" stroke="#88b4c8" /><path d="M8 11c2 1 3 4 2 7" stroke="#a8e4b0" strokeWidth="1.500" /></Svg>,
    },
    {
        name: "History", box: "h-[57px]",
        icon: <Svg w={24}><circle cx="12" cy="12" r="10.500" fill="#f0f4fb" stroke="#6d7684" strokeWidth="2" /><circle cx="12" cy="12" r="7.500" stroke="#8893a8" strokeDasharray="1 3" /><path d="M12 5v7.500h6" stroke="#1b2a5c" strokeWidth="1.800" /></Svg>,
    },
    {
        name: "Process Studio", box: "h-7",
        icon: <Svg w={22} h={24}><defs><linearGradient id="hue" x1="0" y1="0" x2="0" y2="1"><stop stopColor="#e33218" /><stop offset=".3" stopColor="#f4e41c" /><stop offset=".6" stopColor="#35d45c" /><stop offset=".85" stopColor="#1d8fe8" /><stop offset="1" stopColor="#1338b8" /></linearGradient></defs><path d="M1 1h8v22H1z" fill="url(#hue)" /><path d="M11 9l8 12" stroke="#111" strokeWidth="2.800" /><path d="M10 8l2 2" stroke="#fff" strokeWidth="2.500" /></Svg>,
    },
    {
        name: "Manufacturing", box: "h-[58px]",
        icon: <Svg w={22} h={22}><path d="M1 2h8v16H1z" fill="#4a94d8" /><path d="M3 2v16M6 2v16M1 6h8M1 10h8M1 14h8" stroke="#bfe0f8" strokeWidth="0.700" /><path d="M9 5h12M10 9h9l2-4" stroke="#34579a" strokeWidth="1.500" /><path d="M11 9l8 11" stroke="#111" strokeWidth="2.800" /></Svg>,
    },
    {
        name: "Roles", box: "h-[26px]",
        icon: <Svg w={20} h={24}><path d="M2 22h14v-3H9l2-5-4-1-5 6z" fill="#8a7c6c" stroke="#3c3430" strokeWidth="0.800" /><path d="M6 13l4-7M10 6l7-3 2 3" stroke="#5c5650" strokeWidth="2" /><circle cx="10" cy="5" r="2.500" fill="#c6c0b8" stroke="#3c3430" strokeWidth="0.800" /><circle cx="6" cy="13" r="2.500" fill="#a99b8c" stroke="#3c3430" strokeWidth="0.800" /><path d="M1 21h7v3H1z" fill="#e39a3c" /></Svg>,
    },
]

const Rail = () => {
    const [open, setOpen] = useState<string>("Assembly Navigator")
    return (
        <aside className="flex w-8 flex-col border-r border-[#9c9c9c] bg-[#dcdcdc]">
            <button aria-label="Resource bar options" className="mb-3 flex h-7 items-center justify-center">
                <Svg w={14}><circle cx="7" cy="7" r="4.500" stroke="#333" strokeWidth="1.500" /><path d="M7 0v2M7 12v2M0 7h2M12 7h2M2 2l1.500 1.500M10.500 10.500L12 12M12 2l-1.500 1.500M2 12l1.500-1.500" stroke="#333" strokeWidth="1.500" /></Svg>
            </button>
            {rail.map((item) => (
                <button
                    key={item.name}
                    aria-label={item.name}
                    onClick={() => setOpen(item.name)}
                    className={`flex shrink-0 items-center justify-center pl-1 ${item.box} ${open === item.name ? "ml-0.5 -mr-px border-y border-l border-[#aaa] bg-white pl-0.5" : ""}`}
                >
                    {item.icon}
                </button>
            ))}
        </aside>
    )
}

/* ---------- assembly navigator ---------- */

const FolderIcon = () => (
    <Svg w={16} h={14}><path d="M1 12V3h5l1 2h6v2" fill="#f5d35c" stroke="#8a6414" /><path d="M1 13l3-6h11l-3 6z" fill="#fbe28a" stroke="#8a6414" /></Svg>
)
const AssemblyIcon = () => <Svg w={16}>{cubeShape(0, 0, 9, "yellow")}{cubeShape(1, 7, 9, "yellow")}{cubeShape(8, 6, 8, "yellow")}</Svg>
const PatternsIcon = () => (
    <Svg w={16}><path d="M1 1v6l3-3zM8 1v6L5 4zM4.500 0v8" fill="#223" stroke="#223" />{cubeShape(2, 7, 7, "yellow")}{cubeShape(8, 8, 7, "yellow")}</Svg>
)

const Check = ({ label, dim }: { label: string; dim?: boolean }) => (
    <span className="grid h-3 w-3 shrink-0 place-items-center">
        <input id={label} type="checkbox" defaultChecked className="peer col-start-1 row-start-1 h-3 w-3 appearance-none border border-[#222] bg-white" />
        <span className="pointer-events-none invisible col-start-1 row-start-1 peer-checked:visible">
            <Svg w={10}><path d="M1 5l3 3.500L9 1" stroke={dim ? "#a8a8b0" : "#c0282c"} strokeWidth="2" /></Svg>
        </span>
    </span>
)

const Branch = ({ last, sign }: { last?: boolean; sign?: string }) => (
    <Svg w={12} h={20}>
        <path d={last ? "M3.500 0v10" : "M3.500 0v20"} stroke="#aaa" strokeDasharray="1 1" />
        <path d="M4 10.500h8" stroke="#aaa" strokeDasharray="1 1" />
        {sign && <path d="M0 6h7v9H0z" fill="#fff" />}
        {sign && <path d={sign === "+" ? "M1 10.500h5M3.500 8v5" : "M1 10.500h5"} stroke="#222" />}
    </Svg>
)

type Node = { text: string; kind: "folder" | "root" | "patterns" | "part"; dim?: boolean; last?: boolean }

const nodes: Node[] = [
    { text: "Sections", kind: "folder" },
    { text: "assembly1 (Order: Chronological)", kind: "root" },
    { text: "Component Patterns", kind: "patterns" },
    { text: "model1 x 2", kind: "part" },
    { text: "model2 x 69", kind: "part", dim: true },
    { text: "model4 x 69", kind: "part", dim: true },
    { text: "model3 x 40", kind: "part", dim: true, last: true },
]

const NodeRow = ({ node }: { node: Node }) => {
    if (node.kind === "folder") return <><Branch /><FolderIcon /><span>{node.text}</span></>
    if (node.kind === "root") return <><Branch sign="-" last /><Check label={node.text} /><AssemblyIcon /><label htmlFor={node.text} className="font-bold">{node.text}</label></>
    if (node.kind === "patterns") return <span className="flex items-center gap-0.5 pl-[19px]"><Branch sign="+" /><PatternsIcon /><span>{node.text}</span></span>
    return (
        <span className="flex items-center gap-[3px] pl-[19px]">
            <Branch last={node.last} />
            <Check label={node.text} dim={node.dim} />
            <Cube size={14} />
            <label htmlFor={node.text} className={node.dim ? "text-[#a8a8a8]" : ""}>{node.text}</label>
        </span>
    )
}

const Section = ({ title }: { title: string }) => (
    <button className="flex h-6 items-center justify-between border-b border-[#bdbdbd] px-[7px] text-[13px] text-[#12565c]">
        {title}
        <Svg w={11} h={9}><path d="M1 1l4.500 6.500L10 1" stroke="#12565c" strokeWidth="2" /></Svg>
    </button>
)

const Navigator = () => (
    <aside className="flex w-[188px] shrink-0 flex-col bg-white pr-[9px] pl-1.5 text-[11px] text-[#222]">
        <div className="flex h-[30px] shrink-0 items-center justify-between pr-1.5 pl-1">
            <h2>Assembly Navigator</h2>
            <button aria-label="Maximize panel"><Svg w={13} h={11}><path d="M.5.500h12v10H.5z" stroke="#111" /><path d="M0 1h13" stroke="#111" strokeWidth="2" /></Svg></button>
        </div>
        <div className="flex min-h-0 flex-1 flex-col border-x border-t border-[#d0d0d0]">
            <div className="flex h-[19px] shrink-0 items-center gap-[18px] border-b border-[#dcdcdc] bg-[#f0f0f0] pl-[7px]">
                Descriptive Part Name
                <Svg w={10} h={5}><path d="M5 0l5 5H0z" fill="#111" /></Svg>
            </div>
            <ul className="min-h-0 flex-1 overflow-hidden">
                {Array.from({ length: 21 }, (_, i) => (
                    <li key={i} className="flex h-5 items-center gap-[3px] overflow-hidden border-b border-[#e9e9e9] bg-white pl-1.5 whitespace-nowrap even:bg-[#f8f8f8]">
                        {nodes[i] && <NodeRow node={nodes[i]} />}
                    </li>
                ))}
            </ul>
            <div className="flex h-5 shrink-0 items-center bg-[#f1f1f1] px-1.5">
                <Svg w={6} h={9}><path d="M5 1L1.500 4.500 5 8" stroke="#333" strokeWidth="1.800" /></Svg>
                <div className="flex-1 px-1.5"><div className="h-[15px] w-[49px] bg-[#cdcdcd]" /></div>
                <Svg w={6} h={9}><path d="M1 1l3.500 3.500L1 8" stroke="#333" strokeWidth="1.800" /></Svg>
            </div>
        </div>
        <div className="h-[5px] shrink-0 border-y border-[#a8a8a8] bg-[#d8d8d8]" />
        <Section title="Preview" />
        <Section title="Dependencies" />
        <div className="h-1.5 shrink-0" />
    </aside>
)

/* ---------- graphics area ---------- */

// The sprocket is a circle seen at an angle: AX is the screen vector of its
// "12 o'clock" radius, BX the one of its "3 o'clock" radius.
const AX = [-60, -186]
const BX = [170, -27]

const project = (deg: number, r: number, cx: number, cy: number) => {
    const t = (deg * Math.PI) / 180
    return [cx + r * (AX[0] * Math.cos(t) + BX[0] * Math.sin(t)), cy + r * (AX[1] * Math.cos(t) + BX[1] * Math.sin(t))]
}

const toothProfile = [
    [-10, 0.785], [-8, 0.793], [-6.3, 0.82], [-5.1, 0.86], [-4, 0.91], [-3, 0.955], [-2.3, 0.99], [-1.3, 1.0],
    [1.3, 1.0], [2.3, 0.99], [3, 0.955], [4, 0.91], [5.1, 0.86], [6.3, 0.82], [8, 0.793],
]

// depth 0 is the front side of the teeth, 1 the back side; teeth get thinner towards the tip
const sprocket = (depth: number) => {
    const pts: number[][] = []
    for (let i = 0; i < 18; i++) {
        for (const [deg, r] of toothProfile) {
            const root = (1 - r) / 0.215
            const dx = depth * (3 + 6 * root) - 2 * root
            const dy = -depth * (2 + 5 * root) + 1.5 * root
            pts.push(project(i * 20 + deg, r, 792 + dx, 452 + dy))
        }
    }
    const mid = (a: number[], b: number[]) => `${((a[0] + b[0]) / 2).toFixed(1)} ${((a[1] + b[1]) / 2).toFixed(1)}`
    let d = `M${mid(pts[pts.length - 1], pts[0])}`
    pts.forEach((p, i) => {
        d += `Q${p[0].toFixed(1)} ${p[1].toFixed(1)} ${mid(p, pts[(i + 1) % pts.length])}`
    })
    return d + "Z"
}

const disc = (r: number, cx: number, cy: number) => {
    let d = ""
    for (let deg = 0; deg < 360; deg += 3) {
        const [x, y] = project(deg, r, cx, cy)
        d += `${deg ? "L" : "M"}${x.toFixed(1)} ${y.toFixed(1)}`
    }
    return d + "Z"
}

const Model = () => (
    <svg viewBox="222 188 1144 528" fill="none" className="h-full w-full" role="img" aria-label="Sprocket model">
        <defs>
            <linearGradient id="edge" x1="0" y1="0" x2="1" y2="1">
                <stop stopColor="#9fb0b3" /><stop offset=".3" stopColor="#cfe2e5" /><stop offset=".65" stopColor="#d4e8eb" /><stop offset="1" stopColor="#8b9b9e" />
            </linearGradient>
            <linearGradient id="teeth" x1=".3" y1="1" x2=".75" y2="0">
                <stop stopColor="#566265" /><stop offset=".6" stopColor="#617073" /><stop offset="1" stopColor="#84959a" />
            </linearGradient>
            <linearGradient id="ring" x1=".2" y1="0" x2=".8" y2="1">
                <stop stopColor="#6c7b80" /><stop offset=".15" stopColor="#a3b5b9" /><stop offset=".38" stopColor="#cbdadd" /><stop offset=".55" stopColor="#8d9ea3" /><stop offset=".8" stopColor="#4b565a" /><stop offset="1" stopColor="#56636a" />
            </linearGradient>
            <linearGradient id="bore" x1="0" y1="0" x2=".6" y2="1">
                <stop stopColor="#6c7c80" /><stop offset=".35" stopColor="#8fa2a6" /><stop offset=".75" stopColor="#cfe4e8" /><stop offset="1" stopColor="#b9d4d8" />
            </linearGradient>
            <linearGradient id="through" gradientUnits="userSpaceOnUse" x1="0" y1="400" x2="0" y2="490"><stop stopColor="#cecece" /><stop offset="1" stopColor="#dadadb" /></linearGradient>
            <clipPath id="boreClip"><path d={disc(0.225, 784.5, 458)} /><path d="M769 425v-22l32 5v22z" /></clipPath>
        </defs>
        <g stroke="#2b3437" strokeLinejoin="round">
            <path d={sprocket(1)} fill="url(#edge)" strokeWidth="1.200" />
            <path d={sprocket(0.25)} fill="#b4c6c9" strokeWidth="0.700" />
            <path d={sprocket(0)} fill="url(#teeth)" strokeWidth="1.200" />
            <path d={disc(0.79, 788, 455.5)} fill="#606b70" strokeWidth="1" />
            <path d={disc(0.488, 788.5, 455.5)} fill="url(#ring)" strokeWidth="1" />
            <path d={disc(0.452, 784.5, 458)} fill="#606b70" strokeWidth="0.800" />
            <path d={disc(0.225, 784.5, 458)} fill="url(#bore)" strokeWidth="1.200" />
            <path d="M769 417v-14l32 5v16" fill="#8d9da1" strokeWidth="1" />
            <g clipPath="url(#boreClip)">
                <path d="M769 425v-22l32 5v22z" fill="#7f9094" stroke="none" />
                <path d={disc(0.225, 803, 444)} fill="url(#through)" strokeWidth="1.200" />
                <path d="M764 421l17-15h22v40h-34z" fill="url(#through)" stroke="none" />
                <path d="M764 421l17-15M769 403l32 5v16" strokeWidth="1" />
            </g>
        </g>
        <g>
            <path d="M272 645l8-5 14 3v17l-8 6-14-3z" fill="#c9cccc" fillOpacity=".6" stroke="#9ba0a0" strokeWidth="0.800" />
            <path d="M272 645l14 3 8-5M286 648v18M274 661l12-10M276 648l6 6M280 640v17l14 3M280 657l-8 6" stroke="#a5aaaa" strokeWidth="0.800" />
            <path d="M268.500 664v-20" stroke="#1c2a9a" strokeWidth="2" /><path d="M268.500 636l3 9h-6z" fill="#1c2a9a" />
            <path d="M271 667l17 3.500" stroke="#b82a2a" strokeWidth="2" /><path d="M297 672l-9 1 1-5.500z" fill="#b82a2a" />
            <circle cx="268" cy="665.500" r="4" fill="#d6dada" stroke="#889" strokeWidth="0.700" />
            <text x="264" y="637" fontSize="12" fill="#2a3ca4">Z</text>
            <text x="297" y="677" fontSize="12" fill="#c03434">X</text>
        </g>
    </svg>
)

const Graphics = () => (
    <main className="flex min-w-0 flex-1 flex-col border-l border-[#8c8c8c]">
        <div className="flex h-[21px] shrink-0 border-b-2 border-[#4f9fa8] bg-white">
            <div className="flex items-center gap-[7px] bg-[#4f9fb5] pr-1.5 pl-[7px] text-[11px] text-white">
                <Svg w={14}><path d="M1 4l4-3 3 1v5l5-1v4l-6 4-6-3z" fill="#2a62c4" stroke="#173c86" /><path d="M1 4l4-3 3 1-3 3zM5 9l3-2 5-1-5 4z" fill="#7fb0f2" /></Svg>
                <span className="-ml-0.5">assembly1.prt</span>
                <Svg w={10} h={11}><path d="M6 .5H1v9h7V6" stroke="#fff" strokeWidth="1.400" /><path d="M5 1l4 3-4 3z" fill="#fff" /></Svg>
                <button aria-label="Close assembly1.prt"><Svg w={9}><path d="M1 1l7 7M8 1L1 8" stroke="#fff" strokeWidth="2" /></Svg></button>
            </div>
        </div>
        <div className="min-h-0 flex-1 bg-linear-to-b from-[#b6b6b6] via-[#d3d3d4] to-[#e9eaeb]">
            <Model />
        </div>
    </main>
)

/* ---------- taskbar ---------- */

const apps = [
    { name: "Start", icon: <FaWindows size={17} color="#fff" /> },
    { name: "Task View", icon: <Svg><path d="M1 1.500h10M1 14.500h10M1 4.500h10v7H1zM1 0v3M11 0v3M1 13v3M11 13v3M14.500 3v2M14.500 8v8" stroke="#e8e8e8" strokeWidth="1.300" /><path d="M14 0h2v2h-2zM13.500 5.500h2v2h-2z" fill="#e8e8e8" /></Svg> },
    {
        name: "Edge", running: true,
        icon: <Svg w={17} vb="0 0 24 24"><circle cx="12" cy="12" r="11.500" fill="#1f86d2" /><path d="M1 11C2 2 12-1 19 3c6 5 5 12 0 13-4 1-6-1-4-3 1-3-1-5-4-5-5 0-9 2-10 3z" fill="#3fc4a4" /><path d="M10 8c-5 3-5 12 3 14 4 1 7-1 9-3-6 3-12-1-12-5-1-3 0-5 2-6z" fill="#14549c" /><path d="M12 9c3-1 5 2 4 4-2 3-4 3-5 0 0-2 0-3 1-4z" fill="#1b1b1b" /></Svg>,
    },
    { name: "File Explorer", icon: <Svg w={17} h={14}><path d="M0 0h6l1 2h10v12H0z" fill="#e8b73c" /><path d="M1 4h15v9H1z" fill="#f8dc7c" /><path d="M4 14V9h9v5h-2v-3H6v3z" fill="#4a9ad4" /></Svg> },
    { name: "WhatsApp", icon: <span className="flex h-4 w-4 items-center justify-center rounded-full bg-[#2cb742]"><FaWhatsapp size={15} color="#fff" /></span> },
    { name: "Word", icon: <Svg w={15}><path d="M3 0h12v15H3z" fill="#f4f7fd" stroke="#8ea4d0" /><path d="M0 2l10-1v13L0 13z" fill="#cfdcf4" stroke="#3c5ca8" /><path d="M2 5l1.500 6L5.500 5l2 6L9 4" stroke="#24408c" strokeWidth="1.400" /></Svg> },
    { name: "Excel", icon: <Svg w={15}><path d="M3 0h12v15H3z" fill="#f4fbf4" stroke="#8cb890" /><path d="M0 2l10-1v13L0 13z" fill="#d4ecd4" stroke="#3c8c4c" /><path d="M2 4l6 8M8 4l-6 8" stroke="#1f6c30" strokeWidth="2" /></Svg> },
    { name: "NX", running: true, current: true, icon: <Svg w={17} h={15}><path d="M1 3l6-3v6L3 9z" fill="#c8283c" /><path d="M6 4h6l4-2-1 6c-1 4-5 6-9 6l-3-4z" fill="#52aed0" /><path d="M7 5l4 3 5-3-3 6-5 1z" fill="#e6f2f8" /><path d="M1 14l6-3 6 1-4 3z" fill="#2a6a8c" /></Svg> },
    {
        name: "Paint", running: true,
        icon: <Svg w={17} h={16}><path d="M1 1h15v14H1z" fill="#141414" stroke="#f2f2f2" strokeWidth="1.400" /><path d="M4 3l6 3 3 6-5-4z" fill="#e8c088" /><path d="M9 6l4 2v5z" fill="#4a7cb4" /></Svg>,
    },
    { name: "Calculator", running: true, icon: <Svg w={13} h={16}><path d="M0 0h13v16H0z" fill="#5f7f94" /><path d="M2 2h9v3H2z" fill="#c8e4f4" /><path d="M2 7h2v2H2zM5 7h2v2H5zM2 10h2v2H2zM5 10h2v2H5zM2 13h2v2H2zM5 13h2v2H5zM9 7h2v2H9z" fill="#d8e8f0" /><path d="M9 10h2v5H9z" fill="#2c4c64" /></Svg> },
    { name: "Video", running: true, icon: <Svg w={12} h={15}><path d="M1 0v15M11 0v15" stroke="#f4f4f4" strokeWidth="1.500" strokeDasharray="1.500 1.500" /><path d="M3 3h6v8H3z" fill="#fff" /><path d="M3 0h6v1.500H3zM3 13h6v2H3z" fill="#fff" /></Svg> },
]

const Taskbar = () => (
    <footer className="flex h-[30px] shrink-0 items-stretch bg-[#1b1b1b] text-[11px] text-[#f0f0f0]">
        <div className="flex flex-1 gap-px">
            {apps.map((app) => (
                <button key={app.name} aria-label={app.name} className={`flex w-9 flex-col items-center ${app.current ? "bg-[#454648]" : ""}`}>
                    <span className="flex flex-1 items-center">{app.icon}</span>
                    {app.running ? <span className={`h-0.5 bg-[#78b6e4] ${app.current ? "w-9" : "w-7"}`} /> : <span className="h-0.5" />}
                </button>
            ))}
        </div>
        <div className="flex items-center gap-3 pr-1">
            <button aria-label="Hidden icons"><Svg w={12} h={8}><path d="M1 7l5-5 5 5" stroke="#eee" strokeWidth="1.400" /></Svg></button>
            <Svg w={16} h={13}><path d="M5 4.500h10v6H5z" stroke="#eee" /><path d="M7 6h7v3H7z" fill="#eee" /><path d="M1 1v3M4 1v3M.5 4h4v2.500l-2 1.500-2-1.500zM2.500 8v3H5" stroke="#eee" /></Svg>
            <Svg w={13}><path d="M12 1C5 1 1 6 1 13M12 4.500C7 4.500 4.500 8 4.500 13M12 8c-3 0-4.500 2-4.500 5" stroke="#ddd" strokeWidth="1.200" /><circle cx="11" cy="12" r="1.500" fill="#fff" /></Svg>
            <span>ENG</span>
            <span>22:33</span>
            <button aria-label="Notifications" className="ml-1.5 pr-2"><Svg w={16}><path d="M0 1h16v11h-5l-3 3.500V12H0z" fill="#fff" /><path d="M3 4.500h10M3 6.500h10M3 9h7" stroke="#1b1b1b" /></Svg></button>
            <span className="h-full w-px bg-[#5a5a5a]" />
        </div>
    </footer>
)

export default function App() {
    return (
        <div className="flex h-screen flex-col overflow-hidden bg-white font-['Open_Sans','Noto_Sans_CJK_SC',sans-serif]">
            <TitleBar />
            <TabBar />
            <Ribbon />
            <SelectionBar />
            <div className="flex min-h-0 flex-1">
                <Rail />
                <Navigator />
                <Graphics />
            </div>
            <div className="flex h-[22px] shrink-0 items-center justify-end gap-1 border-t border-[#9c9c9c] bg-white pr-[55px]">
                <Svg><path d="M0 0h16v16H0z" fill="#d2d2d2" /><path d="M2 3l3 4 2-4 2 5 4-5M3 12l4-3 5 4" stroke="#999" /></Svg>
                <FullScreenIcon />
            </div>
            <Taskbar />
            <div className="pointer-events-none fixed inset-0 flex items-center justify-center">
                <p className="flex items-baseline leading-none text-[#f2f2f2] [text-shadow:1px_1px_1px_#555]">
                    <span className="font-['Noto_Sans_CJK_SC',sans-serif] text-[55px] font-light">莫西网</span>
                    <span className="flex gap-2 font-['Liberation_Mono',monospace] text-[46px]">
                        <span>www.</span><span>3dmox.</span><span>com</span>
                    </span>
                </p>
            </div>
        </div>
    )
}
